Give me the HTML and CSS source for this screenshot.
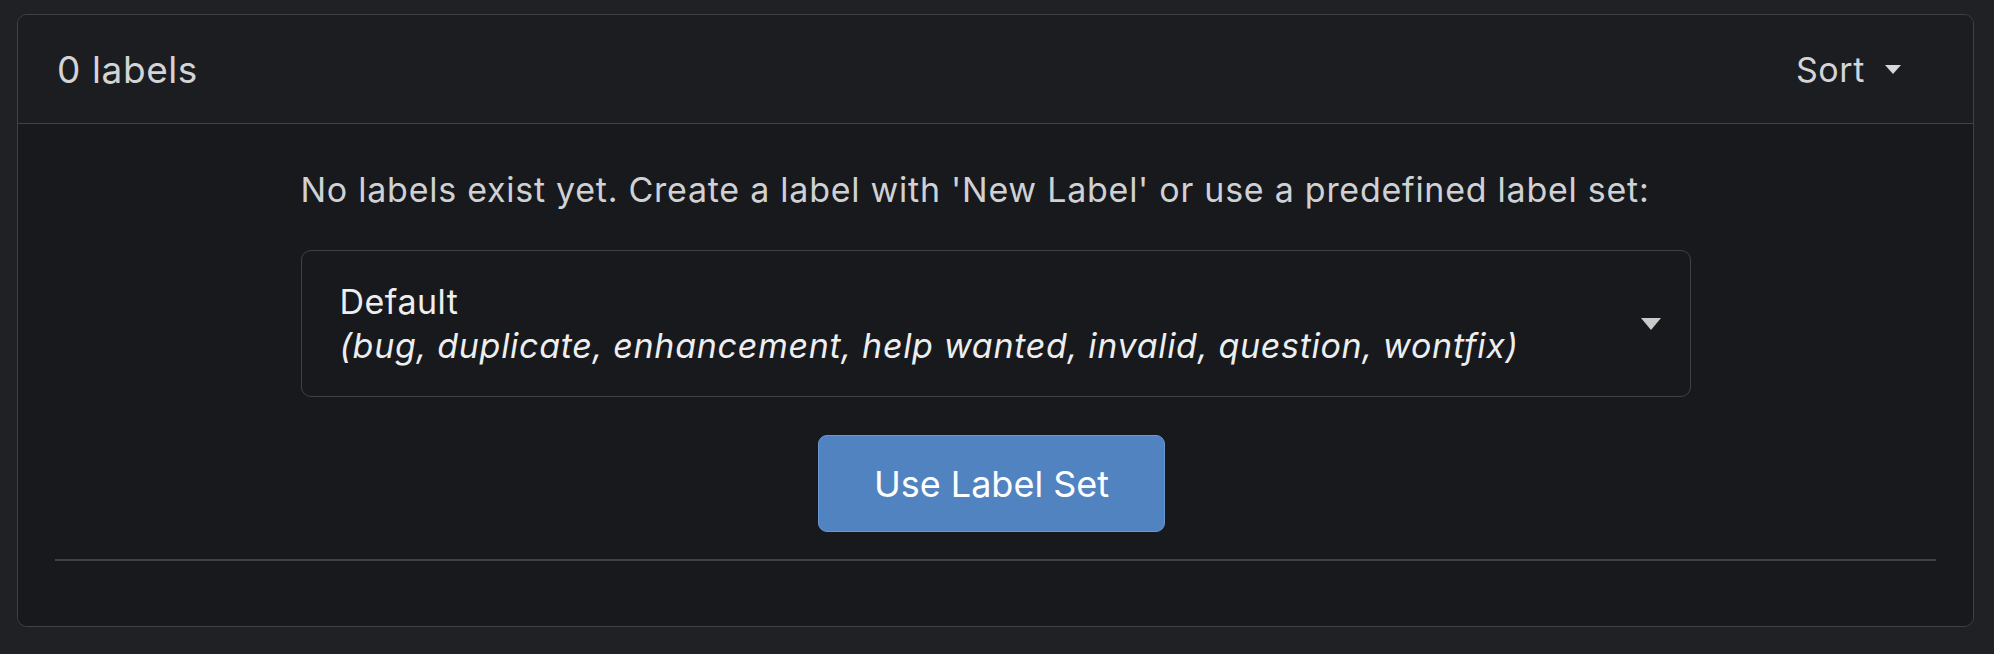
FILE: index.html
```html
<!DOCTYPE html>
<html>
<head>
<meta charset="utf-8">
<link rel="stylesheet" href="styles.css">
</head>
<body>
<div class="card">
  <div class="card-header">
    <div class="title">0 labels</div>
    <div class="sort">Sort <span class="caret"></span></div>
  </div>
  <div class="card-body">
    <div class="content">
      <p class="intro">No labels exist yet. Create a label with 'New Label' or use a predefined label set:</p>
      <div class="dropdown">
        <div class="dd-text">
          <div class="dd-name">Default</div>
          <div class="dd-desc">(bug, duplicate, enhancement, help wanted, invalid, question, wontfix)</div>
        </div>
        <span class="dd-caret"></span>
      </div>
      <div class="actions">
        <button class="btn">Use Label Set</button>
      </div>
    </div>
    <div class="divider"></div>
  </div>
</div>
</body>
</html>
```
FILE: styles.css
```css
html, body {
  margin: 0;
  padding: 0;
  background: #1f2125;
}
body {
  padding: 14px 20px 0 17px;
  font-family: Inter, "Noto Sans", sans-serif;
}
.card {
  border: 1.5px solid #3d4148;
  border-radius: 10px;
  overflow: hidden;
  height: 613px;
  box-sizing: border-box;
  display: flex;
  flex-direction: column;
}
.card-header {
  height: 109px;
  background: #1c1d20;
  border-bottom: 1.5px solid #3d4148;
  display: flex;
  align-items: center;
  justify-content: space-between;
  padding: 0 72px 0 39px;
  box-sizing: border-box;
}
.title {
  color: #d2d4d8;
  font-size: 37px;
  letter-spacing: 0.6px;
}
.sort {
  color: #d2d4d8;
  font-size: 34px;
  letter-spacing: 0.6px;
  display: flex;
  align-items: center;
  gap: 20px;
}
.caret {
  width: 0;
  height: 0;
  border-left: 8.5px solid transparent;
  border-right: 8.5px solid transparent;
  border-top: 9px solid #d6d7da;
}
.card-body {
  flex: 1;
  background: #18191c;
  padding: 0 37px;
}
.content {
  width: 1390px;
  margin: 0 auto;
  padding-top: 44px;
}
.intro {
  margin: 0;
  color: #cfd1d5;
  font-size: 34px;
  line-height: 44px;
  letter-spacing: 0.74px;
}
.dropdown {
  margin-top: 38px;
  height: 147px;
  box-sizing: border-box;
  border: 1.5px solid #3d4148;
  border-radius: 10px;
  display: flex;
  align-items: center;
  justify-content: space-between;
  padding: 0 29px 0 38px;
}
.dd-name {
  color: #eceef0;
  font-size: 34px;
  line-height: 44px;
  letter-spacing: 0.5px;
}
.dd-desc {
  color: #eceef0;
  font-size: 34px;
  font-style: italic;
  line-height: 44px;
  letter-spacing: 0.7px;
}
.dd-caret {
  width: 0;
  height: 0;
  border-left: 10.5px solid transparent;
  border-right: 10.5px solid transparent;
  border-top: 12px solid #cacaca;
}
.actions {
  display: flex;
  justify-content: center;
  margin-top: 38px;
  padding-right: 8px;
}
.btn {
  width: 347px;
  height: 97px;
  background: #5283c1;
  border: 1.5px solid #6a98d2;
  border-radius: 9px;
  color: #ffffff;
  font-family: Inter, "Noto Sans", sans-serif;
  font-size: 36px;
}
.divider {
  margin-top: 27px;
  height: 2px;
  background: #3d4148;
}
```
